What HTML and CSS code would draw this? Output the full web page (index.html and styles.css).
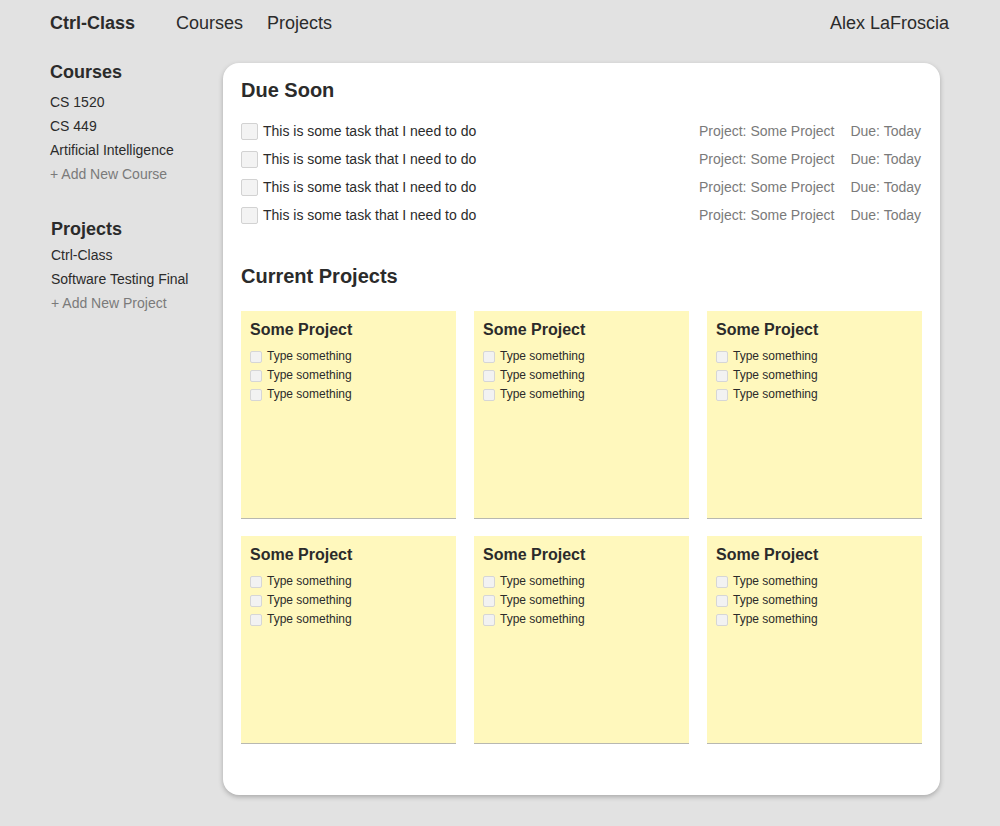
FILE: index.html
```html
<!DOCTYPE html>
<html>
<head>
<meta charset="utf-8">
<title>Ctrl-Class</title>
<link rel="stylesheet" href="styles.css">
</head>
<body>
<header class="topbar">
  <div class="brand">Ctrl-Class</div>
  <nav class="nav">
    <a class="nav-link">Courses</a>
    <a class="nav-link">Projects</a>
  </nav>
  <div class="user">Alex LaFroscia</div>
</header>
<div class="layout">
  <aside class="sidebar">
    <h2 class="side-title">Courses</h2>
    <ul class="side-list">
      <li>CS 1520</li>
      <li>CS 449</li>
      <li>Artificial Intelligence</li>
      <li class="add">+ Add New Course</li>
    </ul>
    <h2 class="side-title side-title-projects">Projects</h2>
    <ul class="side-list side-list-projects">
      <li>Ctrl-Class</li>
      <li>Software Testing Final</li>
      <li class="add">+ Add New Project</li>
    </ul>
  </aside>
  <main class="panel">
    <h1 class="section-title">Due Soon</h1>
    <ul class="tasks">
      <li class="task"><span class="check"></span><span class="task-text">This is some task that I need to do</span><span class="meta">Project: Some Project</span><span class="meta due">Due: Today</span></li>
      <li class="task"><span class="check"></span><span class="task-text">This is some task that I need to do</span><span class="meta">Project: Some Project</span><span class="meta due">Due: Today</span></li>
      <li class="task"><span class="check"></span><span class="task-text">This is some task that I need to do</span><span class="meta">Project: Some Project</span><span class="meta due">Due: Today</span></li>
      <li class="task"><span class="check"></span><span class="task-text">This is some task that I need to do</span><span class="meta">Project: Some Project</span><span class="meta due">Due: Today</span></li>
    </ul>
    <h1 class="section-title projects-title">Current Projects</h1>
    <div class="notes">
      <div class="note"><h3 class="note-title">Some Project</h3><ul class="note-list"><li><span class="mini-check"></span>Type something</li><li><span class="mini-check"></span>Type something</li><li><span class="mini-check"></span>Type something</li></ul></div>
      <div class="note"><h3 class="note-title">Some Project</h3><ul class="note-list"><li><span class="mini-check"></span>Type something</li><li><span class="mini-check"></span>Type something</li><li><span class="mini-check"></span>Type something</li></ul></div>
      <div class="note"><h3 class="note-title">Some Project</h3><ul class="note-list"><li><span class="mini-check"></span>Type something</li><li><span class="mini-check"></span>Type something</li><li><span class="mini-check"></span>Type something</li></ul></div>
      <div class="note"><h3 class="note-title">Some Project</h3><ul class="note-list"><li><span class="mini-check"></span>Type something</li><li><span class="mini-check"></span>Type something</li><li><span class="mini-check"></span>Type something</li></ul></div>
      <div class="note"><h3 class="note-title">Some Project</h3><ul class="note-list"><li><span class="mini-check"></span>Type something</li><li><span class="mini-check"></span>Type something</li><li><span class="mini-check"></span>Type something</li></ul></div>
      <div class="note"><h3 class="note-title">Some Project</h3><ul class="note-list"><li><span class="mini-check"></span>Type something</li><li><span class="mini-check"></span>Type something</li><li><span class="mini-check"></span>Type something</li></ul></div>
    </div>
  </main>
</div>
</body>
</html>
```

FILE: styles.css
```css
* { box-sizing: border-box; }
html, body { margin: 0; padding: 0; }
body {
  background: #e2e2e2;
  color: #2b2b2b;
  font-family: "Liberation Sans", Arial, Helvetica, sans-serif;
  min-height: 826px;
}
ul { list-style: none; margin: 0; padding: 0; }
h1, h2, h3 { margin: 0; }

.topbar {
  display: flex;
  align-items: center;
  height: 45px;
  padding: 2px 51px 0 50px;
  font-size: 18px;
}
.brand { font-weight: bold; }
.nav { display: flex; margin-left: 41px; gap: 24px; }
.nav-link { color: #2b2b2b; text-decoration: none; }
.user { margin-left: auto; }

.layout {
  display: flex;
  padding: 18px 60px 30px 50px;
}
.sidebar { width: 173px; flex-shrink: 0; }
.side-title {
  font-size: 18px;
  line-height: 20px;
  font-weight: bold;
  margin-top: -1px;
}
.side-list { margin-top: 8px; font-size: 14px; line-height: 24px; }
.side-list .add { color: #7a7a7a; }
.side-title-projects { margin-top: 33px; padding-left: 1px; }
.side-list-projects { margin-top: 4px; padding-left: 1px; }

.panel {
  flex: 1;
  background: #fff;
  border-radius: 16px;
  box-shadow: 0 2px 5px rgba(0, 0, 0, 0.25);
  padding: 15px 18px 51px 18px;
}
.section-title {
  font-size: 20px;
  line-height: 24px;
  font-weight: bold;
}
.tasks { margin-top: 15px; }
.task {
  display: flex;
  align-items: center;
  height: 28px;
  font-size: 14px;
}
.check {
  width: 17px;
  height: 17px;
  background: #f3f3f3;
  border: 1px solid #d2d2d2;
  border-radius: 2px;
  margin-right: 5px;
  flex-shrink: 0;
}
.task-text { flex: 1; }
.meta { color: #7a7a7a; }
.due { margin-left: 16px; margin-right: 1px; }

.projects-title { margin-top: 35px; }
.notes {
  margin-top: 23px;
  display: grid;
  grid-template-columns: repeat(3, 1fr);
  column-gap: 18px;
  row-gap: 17px;
}
.note {
  height: 208px;
  background: #fff8bd;
  border-bottom: 1px solid #b8b8b0;
  padding: 9px 9px 8px;
}
.note-title {
  font-size: 16px;
  line-height: 20px;
  font-weight: bold;
}
.note-list { margin-top: 7px; font-size: 12px; line-height: 19px; }
.note-list li { display: flex; align-items: center; }
.mini-check {
  width: 12px;
  height: 12px;
  background: #f2f2f2;
  border: 1px solid #d6d6d6;
  border-radius: 2px;
  margin-right: 5px;
}
```
